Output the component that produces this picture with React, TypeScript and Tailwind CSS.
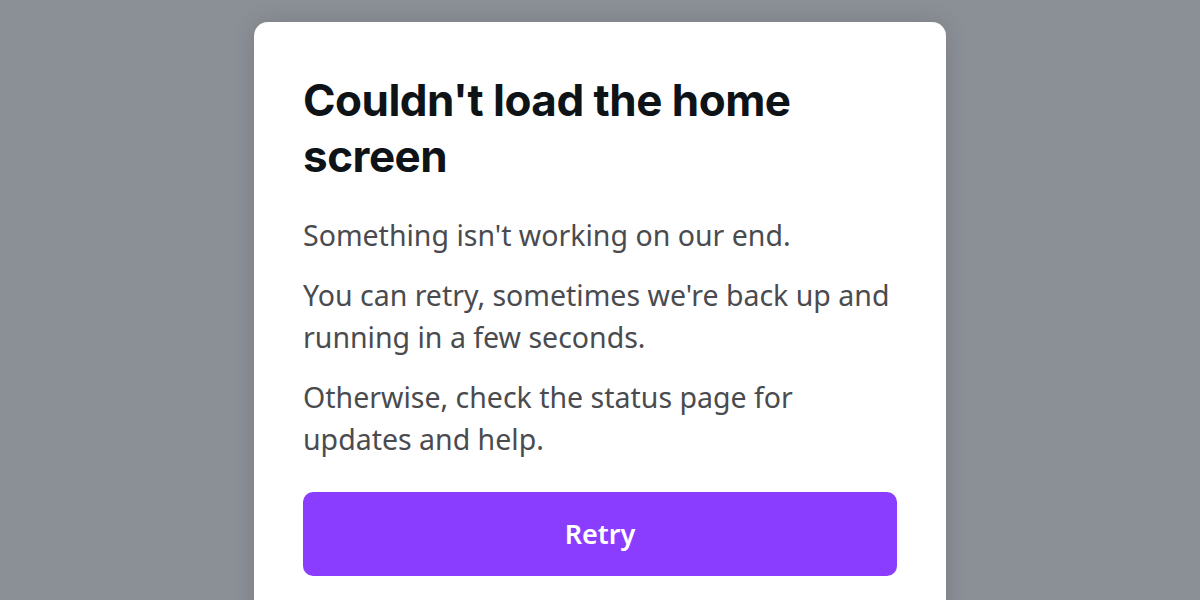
export default function App() {
  return (
    <div className="flex h-[600px] w-full justify-center overflow-hidden bg-[#8b8f96] pt-[22px]">
      <div className="flex h-[620px] w-[692px] flex-col rounded-t-[14px] bg-white px-[49px] pt-[50px] shadow-[0_0_24px_rgba(0,0,0,0.12)]">
        <h1 className="font-['Inter',sans-serif] text-[44px] font-bold leading-[56px] tracking-[-0.5px] text-[#0e1318]">
          Couldn't load the home screen
        </h1>
        <div className="mt-[30px] flex flex-col gap-[18px] font-['Noto_Sans',sans-serif] text-[28.5px] leading-[42px] text-[#4a4b4f]">
          <p>Something isn't working on our end.</p>
          <p>You can retry, sometimes we're back up and running in a few seconds.</p>
          <p>Otherwise, check the status page for updates and help.</p>
        </div>
        <button className="mt-[32px] h-[84px] w-full rounded-[10px] bg-[#8b3dff] font-['Noto_Sans',sans-serif] text-[27px] font-semibold text-white">
          Retry
        </button>
      </div>
    </div>
  );
}
